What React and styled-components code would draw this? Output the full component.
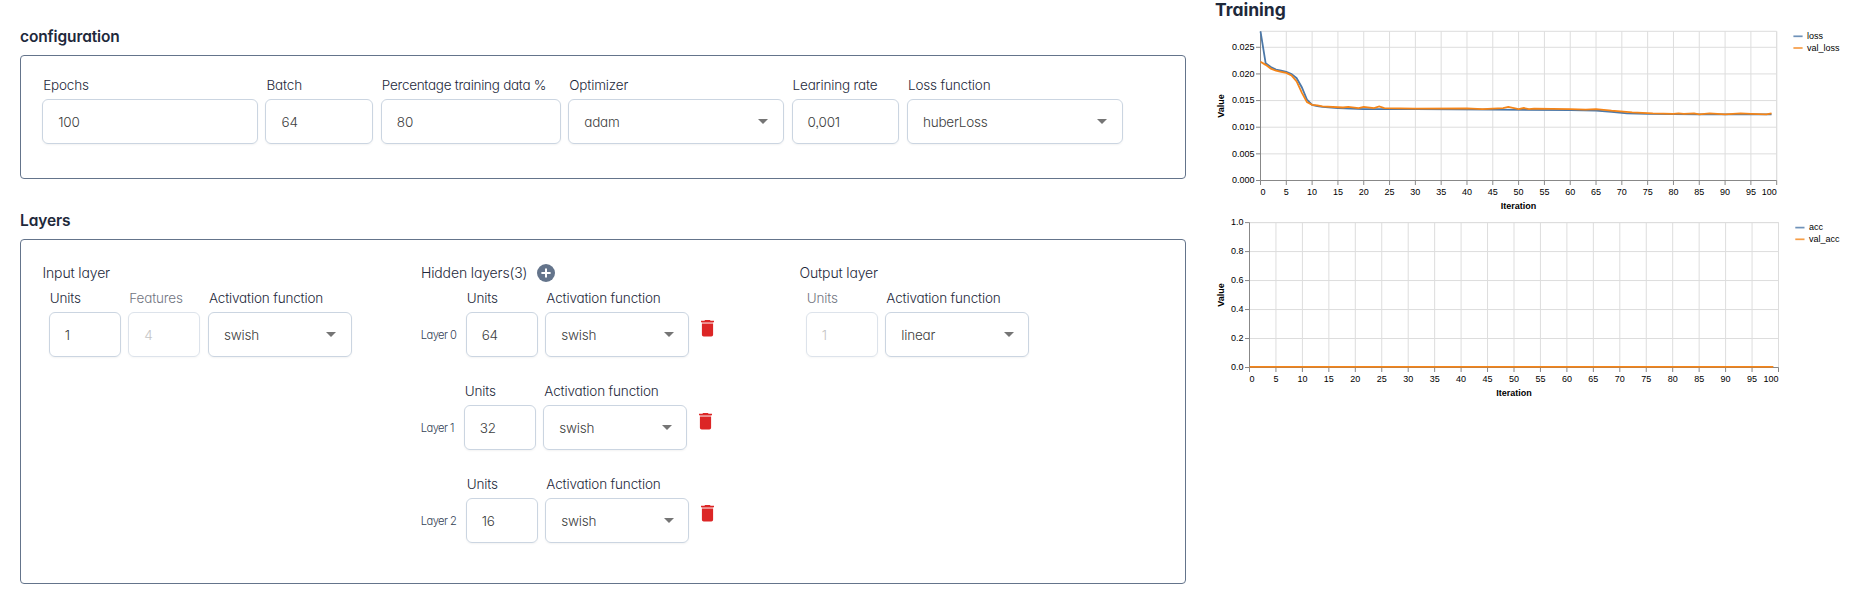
import React from 'react';
import styled, { createGlobalStyle } from 'styled-components';

const Global = createGlobalStyle`
  * { box-sizing: border-box; }
  body { margin: 0; background: #fff; color: #1e293b; font-family: Inter, "Liberation Sans", sans-serif; font-feature-settings: "cv11", "ss03"; }
`;

const Page = styled.main`
  display: flex;
  width: 1849px;
  height: 591px;
  overflow: hidden;
`;
const Settings = styled.div`
  width: 1166px;
  margin-left: 20px;
  padding-top: 26px;
`;
const Title = styled.h2`
  margin: 0;
  height: 29px;
  line-height: 21px;
  font-size: 15.5px;
  font-weight: 600;
  white-space: nowrap;
  letter-spacing: -0.12px;
`;
const Panel = styled.section`
  display: flex;
  height: ${p => p.$height}px;
  border: 1px solid #64748b;
  border-radius: 4px;
  padding: ${p => p.$top}px 21px 0 21.2px;
  margin-bottom: ${p => p.$gap || 0}px;
`;
const Fields = styled.div`
  display: flex;
  gap: 7.6px;
`;
const FieldBox = styled.label`
  display: flex;
  flex-direction: column;
  flex: none;
  width: ${p => p.$width}px;
  opacity: ${p => (p.$disabled ? 0.65 : 1)};
`;
const Label = styled.span`
  height: 24px;
  padding: 1px 0 0 1px;
  line-height: 18px;
  font-size: 13.5px;
  font-weight: 360;
  letter-spacing: ${p => p.$spacing}px;
  white-space: nowrap;
`;
const Control = styled.span`
  display: flex;
  align-items: center;
  justify-content: space-between;
  height: 45px;
  padding: 0 14.5px 0 15px;
  border: 1px solid #cbd5e1;
  border-radius: 6px;
  box-shadow: 0 1px 2px rgba(0, 0, 0, 0.05);
  font-size: 13.5px;
  font-weight: 350;
  letter-spacing: -0.2px;
  color: ${p => (p.$disabled ? '#a6a6a6' : '#404040')};
`;
const Arrow = styled.span`
  border: 5px solid transparent;
  border-top-color: #757575;
  border-bottom: 0;
`;

function Field({ label, value, width, select, disabled, spacing = -0.16 }) {
  return (
    <FieldBox $width={width} $disabled={disabled}>
      <Label $spacing={spacing}>{label}</Label>
      <Control $disabled={disabled}>
        {value}
        {select && <Arrow />}
      </Control>
    </FieldBox>
  );
}

const Column = styled.div`
  width: 378.5px;
  flex: none;
`;
const ColumnTitle = styled.h3`
  display: flex;
  align-items: center;
  gap: 10px;
  height: 28px;
  margin: 0;
  padding: 0 0 3px 0.3px;
  line-height: 20px;
  font-size: 14px;
  font-weight: 360;
  letter-spacing: -0.14px;
  white-space: nowrap;
`;
const Indented = styled(Fields)`
  padding-left: 6.5px;
`;
const LayerRow = styled.div`
  display: flex;
  height: 93px;
`;
const LayerName = styled.span`
  width: ${p => p.$width}px;
  padding: 38px 0 0;
  line-height: 18px;
  font-size: 11.2px;
  font-weight: 350;
  letter-spacing: -0.55px;
  color: #334155;
  white-space: nowrap;
`;
const DeleteIcon = styled.svg`
  width: 13px;
  height: 17px;
  margin: ${p => p.$top}px 0 0 12px;
`;

const Trash = ({ top }) => (
  <DeleteIcon $top={top} viewBox="0 0 13 17">
    <path fill="#dc2626" d="M0 .8h3.3l.9-.8h4.6l.9.8H13v1.4H0z" />
    <path fill="#dc2626" opacity=".5" d="M.9 2.2h11.2v1.9H.9z" />
    <path fill="#dc2626" d="M.9 4.1h11.2v10.6a1.8 1.8 0 0 1-1.8 1.8H2.7a1.8 1.8 0 0 1-1.8-1.8z" />
  </DeleteIcon>
);
const AddIcon = () => (
  <svg width="18" height="18" viewBox="0 0 18 18">
    <circle cx="9" cy="9" r="9" fill="#64748b" />
    <path d="M9 4.4v9.2M4.4 9h9.2" stroke="#fff" strokeWidth="2" />
  </svg>
);

const Training = styled.aside`
  display: flex;
  flex-direction: column;
  margin-left: 24px;
  width: 639px;
  padding-left: 5px;
`;
const TrainingTitle = styled.h2`
  margin: 0;
  height: 22px;
  line-height: 20px;
  font-size: 17.5px;
  font-weight: 700;
`;
const Plot = styled.svg`
  display: block;
  width: 634px;
  font-family: "Liberation Sans", Arial, sans-serif;
  font-size: 9px;
  .title { font-weight: 700; fill: #000; }
`;

const BLUE = '#4c78a8';
const ORANGE = '#f58518';

function Chart({ height, offset, x0, x1, y0, y1, yTicks, max, lines, legend, legendX }) {
  const sx = v => x0 + ((x1 - x0) * v) / 100;
  const sy = v => y1 - ((y1 - y0) * v) / max;
  const xTicks = Array.from({ length: 21 }, (_, i) => i * 5);
  const digits = max === 1 ? 1 : 3;
  return (
    <Plot height={height} viewBox={`1215 ${offset} 634 ${height}`}>
      <g stroke="#ddd">
        {xTicks.map(t => <path key={t} d={`M${sx(t)} ${y0}V${y1}`} />)}
        {yTicks.map(t => <path key={t} d={`M${x0} ${sy(t)}H${x1}`} />)}
        <path d={`M${x0} ${y0}H${x1}V${y1}`} fill="none" />
      </g>
      <g stroke="#888">
        <path d={`M${x0} ${y0}V${y1}H${x1}`} fill="none" />
        {xTicks.map(t => <path key={t} d={`M${sx(t)} ${y1}v4.5`} />)}
        {yTicks.map(t => <path key={t} d={`M${x0} ${sy(t)}h-4.5`} />)}
      </g>
      {xTicks.map(t => (
        <text key={t} x={sx(t)} y={y1 + 14.5} textAnchor={t === 0 ? 'start' : t === 100 ? 'end' : 'middle'}>{t}</text>
      ))}
      {yTicks.map(t => (
        <text key={t} x={x0 - 6} y={sy(t) + 2.8} textAnchor="end">{t.toFixed(digits)}</text>
      ))}
      <text className="title" x={(x0 + x1) / 2} y={y1 + 28} textAnchor="middle">Iteration</text>
      <text className="title" textAnchor="middle" transform={`translate(1223.7 ${(y0 + y1) / 2}) rotate(-90)`}>Value</text>
      {lines.map((pts, i) => (
        <polyline
          key={i}
          fill="none"
          stroke={i ? ORANGE : BLUE}
          strokeWidth="1.8"
          points={pts.map(([x, y]) => `${sx(x)},${sy(y)}`).join(' ')}
        />
      ))}
      {legend.map((name, i) => (
        <g key={name}>
          <path d={`M${legendX} ${y0 + 5 + i * 11.7}h9.2`} stroke={i ? ORANGE : BLUE} strokeWidth="1.7" opacity=".8" />
          <text x={legendX + 13.7} y={y0 + 7.7 + i * 11.7}>{name}</text>
        </g>
      ))}
    </Plot>
  );
}

const loss = [[0, .028], [1, .022], [2, .0213], [3, .0208], [4, .0206], [5, .0204], [6, .02], [7, .0192], [8, .0175], [9, .0152], [10, .0142], [11, .01395], [12, .0138], [15, .0136], [20, .0134], [30, .0134], [45, .0133], [60, .0132], [65, .0131], [68, .0129], [71, .0126], [75, .0125], [85, .0124], [99, .0124]];
const valLoss = [[0, .0223], [1, .0217], [2, .021], [3, .0206], [4, .0204], [5, .0202], [6, .0197], [7, .0186], [8, .0165], [9, .0147], [10, .0142], [11, .0141], [12, .0139], [16, .0137], [17, .0138], [19, .0136], [20, .0138], [22, .0136], [23, .0139], [24, .0136], [30, .0135], [40, .01355], [43, .0134], [47, .0136], [48, .0138], [50, .0134], [51, .0136], [52, .0134], [53, .0135], [60, .0134], [63, .0133], [65, .0134], [68, .0131], [72, .0128], [76, .0126], [80, .0125], [81, .0126], [82, .0125], [84, .0126], [85, .0124], [87, .0126], [90, .0124], [93, .0126], [95, .0125], [98, .0124], [99, .0126]];
const flat = [[0, .004], [99, .004]];

const layers = [
  { units: '64', inset: 45, top: 31.5 },
  { units: '32', inset: 43, top: 31.5 },
  { units: '16', inset: 45, top: 30.5 },
];

export default function App() {
  return (
    <Page>
      <Global />
      <Settings>
        <Title>configuration</Title>
        <Panel $height={124} $gap={31} $top={19}>
          <Fields>
            <Field label="Epochs" value="100" width={215.7} />
            <Field label="Batch" value="64" width={107.8} />
            <Field label="Percentage training data %" value="80" width={179.8} spacing={-0.28} />
            <Field label="Optimizer" value="adam" width={215.7} select />
            <Field label="Learining rate" value="0,001" width={107.8} />
            <Field label="Loss function" value="huberLoss" width={215.7} select />
          </Fields>
        </Panel>
        <Title>Layers</Title>
        <Panel $height={345} $top={20}>
          <Column>
            <ColumnTitle>Input layer</ColumnTitle>
            <Indented>
              <Field label="Units" value="1" width={72} />
              <Field label="Features" value="4" width={72} disabled />
              <Field label="Activation function" value="swish" width={144} select />
            </Indented>
          </Column>
          <Column>
            <ColumnTitle>Hidden layers(3)<AddIcon /></ColumnTitle>
            {layers.map((l, i) => (
              <LayerRow key={i}>
                <LayerName $width={l.inset}>Layer {i}</LayerName>
                <Fields>
                  <Field label="Units" value={l.units} width={72} />
                  <Field label="Activation function" value="swish" width={144} select />
                </Fields>
                <Trash top={l.top} />
              </LayerRow>
            ))}
          </Column>
          <Column>
            <ColumnTitle>Output layer</ColumnTitle>
            <Indented>
              <Field label="Units" value="1" width={72} disabled />
              <Field label="Activation function" value="linear" width={144} select />
            </Indented>
          </Column>
        </Panel>
      </Settings>
      <Training>
        <TrainingTitle>Training</TrainingTitle>
        <Chart height={193} offset={22} x0={1260.5} x1={1776.7} y0={31.3} y1={180.5} max={0.028}
          yTicks={[0, .005, .01, .015, .02, .025]} lines={[loss, valLoss]} legend={['loss', 'val_loss']} legendX={1793.4} />
        <Chart height={200} offset={215} x0={1249.5} x1={1778.5} y0={222.6} y1={367.5} max={1}
          yTicks={[0, .2, .4, .6, .8, 1]} lines={[flat, flat]} legend={['acc', 'val_acc']} legendX={1795.3} />
      </Training>
    </Page>
  );
}
